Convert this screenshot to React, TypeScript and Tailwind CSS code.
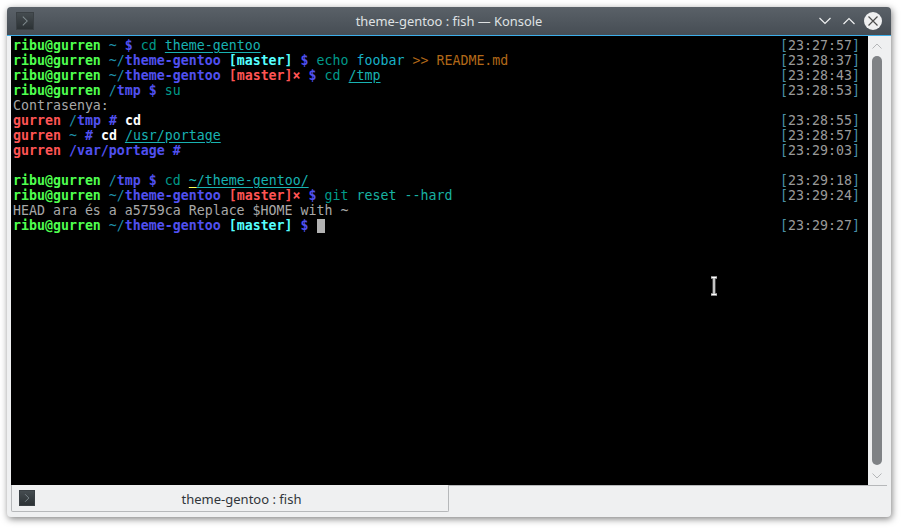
const GREEN = 'font-bold text-[#4fff4f]'
const BLUE = 'font-bold text-[#5050f0]'
const DIM = 'text-[#1f8fa8]'
const CYAN = 'font-bold text-[#55ffff]'
const RED = 'font-bold text-[#ff5454]'
const CMD = 'text-[#009a8a]'
const ARG = 'text-[#18b2a2]'
const LINK = 'text-[#18b2b2] underline underline-offset-2'
const GREY = 'text-[#a8a8a8]'
const WHITE = 'font-bold text-white'

type Seg = [string, string]

function userPrompt(path: Seg[]): Seg[] {
  return [['ribu@gurren', GREEN], [' ', GREY], ...path]
}

const HOME_REPO: Seg[] = [['~/', DIM], ['theme-gentoo', BLUE], [' ', GREY]]
const CLEAN: Seg[] = [...HOME_REPO, ['[master]', CYAN], [' ', GREY], ['$', BLUE], [' ', GREY]]
const DIRTY: Seg[] = [...HOME_REPO, ['[master]', RED], ['×', RED], [' ', GREY], ['$', BLUE], [' ', GREY]]

const LINES: { segs: Seg[]; time?: string; cursor?: boolean }[] = [
  { segs: userPrompt([['~', DIM], [' ', GREY], ['$', BLUE], [' ', GREY], ['cd', CMD], [' ', GREY], ['theme-gentoo', LINK]]), time: '23:27:57' },
  { segs: userPrompt([...CLEAN, ['echo', CMD], [' ', GREY], ['foobar', 'text-[#18b2c8]'], [' ', GREY], ['>>', 'text-[#b26818]'], [' ', GREY], ['README.md', 'text-[#b26818]']]), time: '23:28:37' },
  { segs: userPrompt([...DIRTY, ['cd', CMD], [' ', GREY], ['/tmp', LINK]]), time: '23:28:43' },
  { segs: userPrompt([['/', DIM], ['tmp', BLUE], [' ', GREY], ['$', BLUE], [' ', GREY], ['su', CMD]]), time: '23:28:53' },
  { segs: [['Contrasenya:', GREY]] },
  { segs: [['gurren', RED], [' ', GREY], ['/', DIM], ['tmp', BLUE], [' ', GREY], ['#', BLUE], [' ', GREY], ['cd', WHITE]], time: '23:28:55' },
  { segs: [['gurren', RED], [' ', GREY], ['~', DIM], [' ', GREY], ['#', BLUE], [' ', GREY], ['cd', WHITE], [' ', GREY], ['/usr/portage', LINK]], time: '23:28:57' },
  { segs: [['gurren', RED], [' ', GREY], ['/var/portage', BLUE], [' ', GREY], ['#', BLUE]], time: '23:29:03' },
  { segs: [] },
  { segs: userPrompt([['/', DIM], ['tmp', BLUE], [' ', GREY], ['$', BLUE], [' ', GREY], ['cd', CMD], [' ', GREY], ['~', 'text-[#18b2b2] underline underline-offset-2 decoration-[#ffff54]'], ['/theme-gentoo/', LINK]]), time: '23:29:18' },
  { segs: userPrompt([...DIRTY, ['git', CMD], [' ', GREY], ['reset --hard', ARG]]), time: '23:29:24' },
  { segs: [['HEAD ara és a a5759ca Replace $HOME with ~', GREY]] },
  { segs: userPrompt(CLEAN), time: '23:29:27', cursor: true },
]

function PromptIcon({ size }: { size: number }) {
  return (
    <div
      className="flex items-center justify-center bg-gradient-to-b from-[#454c50] to-[#2c3235] border border-[#3a4044]"
      style={{ width: size, height: size }}
    >
      <svg width={size - 4} height={size - 4} viewBox="0 0 16 16" fill="none" stroke="#7f8a8e" strokeWidth="1.2">
        <path d="M5.5 3 L10.5 8 L5.5 13" />
      </svg>
    </div>
  )
}

function TitleBar() {
  return (
    <div className="h-[28px] shrink-0 flex items-center rounded-t-[4px] bg-gradient-to-b from-[#5a6168] to-[#464d54] pl-[9px] pr-[9px]">
      <div className="w-[84px]">
        <PromptIcon size={18} />
      </div>
      <div className="flex-1 pt-[1px] text-center text-[12.9px] text-[#dfe1e3] font-['Noto_Sans',sans-serif]">
        theme-gentoo : fish — Konsole
      </div>
      <div className="w-[84px] flex items-center justify-end">
        <div className="w-[24px] flex justify-center">
          <svg width="12" height="12" viewBox="0 0 12 12" fill="none" stroke="#eff0f1" strokeWidth="1.2">
            <path d="M0.5 3 L6 8.5 L11.5 3" />
          </svg>
        </div>
        <div className="w-[24px] flex justify-center">
          <svg width="12" height="12" viewBox="0 0 12 12" fill="none" stroke="#eff0f1" strokeWidth="1.2">
            <path d="M0.5 9 L6 3.5 L11.5 9" />
          </svg>
        </div>
        <div className="ml-[3px] w-[18px] h-[18px] rounded-full bg-[#eff0f1] flex items-center justify-center">
          <svg width="12" height="12" viewBox="0 0 12 12" fill="none" stroke="#4d4d4d" strokeWidth="1.2">
            <path d="M1.5 1.5 L10.5 10.5 M10.5 1.5 L1.5 10.5" />
          </svg>
        </div>
      </div>
    </div>
  )
}

function Scrollbar() {
  return (
    <div className="w-[19px] shrink-0 flex flex-col items-center pr-[2px] bg-[#eff0f1]">
      <svg className="mt-[7px] shrink-0" width="10" height="6" viewBox="0 0 10 6" fill="none" stroke="#b4b6b8" strokeWidth="1">
        <path d="M0.5 5.5 L5 1 L9.5 5.5" />
      </svg>
      <div className="mt-[7px] w-[10px] flex-1 rounded-[5px] bg-[#7f8285]" />
      <svg className="mt-[8px] mb-[6px] shrink-0" width="10" height="6" viewBox="0 0 10 6" fill="none" stroke="#b4b6b8" strokeWidth="1">
        <path d="M0.5 0.5 L5 5 L9.5 0.5" />
      </svg>
    </div>
  )
}

function Terminal() {
  return (
    <div className="flex-1 relative bg-black pt-[2px] pl-[2px] pr-[8px] text-[13.28px] leading-[15px] font-['DejaVu_Sans_Mono',monospace]">
      {LINES.map((line, i) => (
        <div key={i} className="h-[15px] flex justify-between whitespace-pre">
          <span className="flex items-start">
            <span>
              {line.segs.map((s, j) => (
                <span key={j} className={s[1]}>{s[0]}</span>
              ))}
            </span>
            {line.cursor && <span className="w-[8px] h-[14px] mt-[1px] bg-[#b2b2b2]" />}
          </span>
          {line.time && (
            <span className="text-[#9a9a9a]">
              <span className="text-[#4a90a8]">[</span>{line.time}<span className="text-[#4a90a8]">]</span>
            </span>
          )}
        </div>
      ))}
      <svg className="absolute left-[698px] top-[240px]" width="10" height="20" viewBox="0 0 10 20" fill="none">
        <path d="M2 1.5 H8 M5 1.5 V18.5 M2 18.5 H8" stroke="#8a8a8a" strokeWidth="3" />
        <path d="M2.5 1.5 H7.5 M5 1.5 V18.5 M2.5 18.5 H7.5" stroke="#ffffff" strokeWidth="1" />
      </svg>
    </div>
  )
}

function TabBar() {
  return (
    <div className="h-[27px] shrink-0 flex pr-[4px]">
      <div className="w-[438px] h-[27px] border-x border-b border-[#b6b8ba] rounded-b-[2px] bg-[#eff0f1] flex items-center pl-[7px]">
        <PromptIcon size={16} />
        <div className="flex-1 pt-[3px] text-center text-[13px] text-[#31363b] font-['Noto_Sans',sans-serif]">
          theme-gentoo : fish
        </div>
      </div>
      <div className="flex-1 h-[1px] bg-[#b6b8ba]" />
    </div>
  )
}

export default function App() {
  return (
    <div className="w-[904px] h-[530px] bg-white pt-[7px] pr-[13px] pb-[13px] pl-[7px] overflow-hidden">
      <div className="h-full flex flex-col rounded-[4px] bg-[#eff0f1] shadow-[1px_2px_7px_rgba(0,0,0,0.5)]">
        <TitleBar />
        <div className="h-[1px] shrink-0 bg-[#3daee9]" />
        <div className="flex-1 flex min-h-0 pl-[4px] pr-[4px]">
          <Terminal />
          <Scrollbar />
        </div>
        <div className="pl-[4px] pb-[5px]">
          <TabBar />
        </div>
      </div>
    </div>
  )
}
